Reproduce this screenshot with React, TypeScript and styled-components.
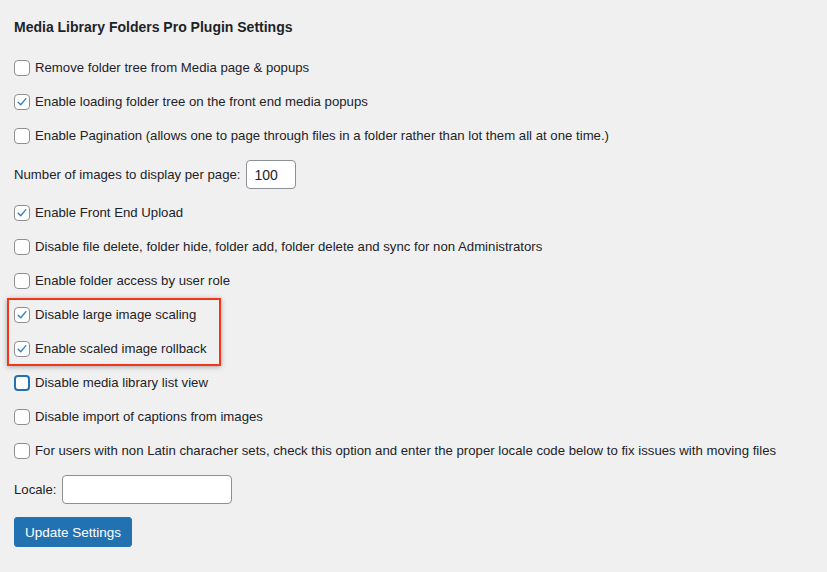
import React, { useState } from 'react';
import styled, { createGlobalStyle } from 'styled-components';

const GlobalStyle = createGlobalStyle`
    body {
        margin: 0;
        background: #f0f0f1;
        color: #1d2327;
        font-family: "Liberation Sans", Arial, sans-serif;
        font-size: 13.2px;
    }
`;

const StyledPage = styled.div`
    padding: 18px 14px 20px 14px;
`;

const StyledHeading = styled.h2`
    margin: 0 0 15px 0;
    font-size: 14px;
    line-height: 18px;
    font-weight: 700;
`;

const StyledRow = styled.label`
    display: flex;
    align-items: center;
    gap: 5px;
    height: 34px;
    line-height: 18px;
`;

const StyledBox = styled.span<{ $focused?: boolean }>`
    flex: none;
    box-sizing: border-box;
    width: 16px;
    height: 16px;
    border-radius: 4px;
    background: #fff;
    border: ${p => p.$focused ? '2px solid #2271b1' : '1px solid #8c8f94'};
    display: flex;
    align-items: center;
    justify-content: center;
`;

const StyledFieldRow = styled.div<{ $height: number }>`
    display: flex;
    align-items: center;
    gap: 5px;
    height: ${p => p.$height}px;
`;

const StyledInput = styled.input<{ $width: number }>`
    box-sizing: border-box;
    width: ${p => p.$width}px;
    height: 29px;
    padding: 0 8px;
    border: 1px solid #8c8f94;
    border-radius: 4px;
    background: #fff;
    color: #1d2327;
    font-family: inherit;
    font-size: 14px;
    :focus {
        outline: none;
    }
`;

const StyledHighlight = styled.div`
    margin-left: -7px;
    padding-left: 7px;
    width: 207px;
    box-shadow: inset 0 0 0 2px #f5351a, 0 1px 5px rgba(0, 0, 0, 0.3);
`;

const StyledButton = styled.button`
    margin-top: 7px;
    height: 30px;
    padding: 0 10px;
    border: 1px solid #2271b1;
    border-radius: 3px;
    background: #2271b1;
    color: #fff;
    font-family: inherit;
    font-size: 13.5px;
    font-weight: 400;
    cursor: pointer;
`;

interface ICheckRow {
    label: string;
    checked?: boolean;
    focused?: boolean;
}

const CheckRow = ({ label, checked, focused }: ICheckRow) => {
    const [on, setOn] = useState(!!checked);
    return (
        <StyledRow onClick={() => setOn(!on)}>
            <StyledBox $focused={focused}>
                {on &&
                    <svg width="14" height="14" viewBox="0 0 20 20">
                        <path d="M4.5 10.2 L8.2 14 L15.5 5.2" fill="none" stroke="#3582c4" strokeWidth="2" strokeLinecap="round" strokeLinejoin="round" />
                    </svg>
                }
            </StyledBox>
            {label}
        </StyledRow>
    );
};

const App = () => (
    <StyledPage>
        <GlobalStyle />
        <StyledHeading>Media Library Folders Pro Plugin Settings</StyledHeading>
        <CheckRow label="Remove folder tree from Media page & popups" />
        <CheckRow label="Enable loading folder tree on the front end media popups" checked />
        <CheckRow label="Enable Pagination (allows one to page through files in a folder rather than lot them all at one time.)" />
        <StyledFieldRow $height={43}>
            Number of images to display per page:
            <StyledInput $width={50} defaultValue="100" />
        </StyledFieldRow>
        <CheckRow label="Enable Front End Upload" checked />
        <CheckRow label="Disable file delete, folder hide, folder add, folder delete and sync for non Administrators" />
        <CheckRow label="Enable folder access by user role" />
        <StyledHighlight>
            <CheckRow label="Disable large image scaling" checked />
            <CheckRow label="Enable scaled image rollback" checked />
        </StyledHighlight>
        <CheckRow label="Disable media library list view" focused />
        <CheckRow label="Disable import of captions from images" />
        <CheckRow label="For users with non Latin characher sets, check this option and enter the proper locale code below to fix issues with moving files" />
        <StyledFieldRow $height={42}>
            Locale:
            <StyledInput $width={170} />
        </StyledFieldRow>
        <StyledButton>Update Settings</StyledButton>
    </StyledPage>
);

export default App;
